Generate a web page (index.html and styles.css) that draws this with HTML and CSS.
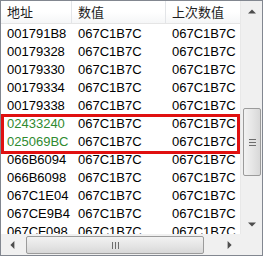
FILE: index.html
```html
<!DOCTYPE html>
<html lang="zh-CN">
<head>
    <meta charset="UTF-8">
    <title>地址列表</title>
    <link rel="stylesheet" href="styles.css">
</head>
<body>
    <div class="listview">
        <div class="viewport">
            <div class="row head">
                <div class="cell">地址</div>
                <div class="cell">数值</div>
                <div class="cell">上次数值</div>
            </div>
            <div class="row"><div class="cell">001791B8</div><div class="cell">067C1B7C</div><div class="cell">067C1B7C</div></div>
            <div class="row"><div class="cell">00179328</div><div class="cell">067C1B7C</div><div class="cell">067C1B7C</div></div>
            <div class="row"><div class="cell">00179330</div><div class="cell">067C1B7C</div><div class="cell">067C1B7C</div></div>
            <div class="row"><div class="cell">00179334</div><div class="cell">067C1B7C</div><div class="cell">067C1B7C</div></div>
            <div class="row"><div class="cell">00179338</div><div class="cell">067C1B7C</div><div class="cell">067C1B7C</div></div>
            <div class="row static"><div class="cell">02433240</div><div class="cell">067C1B7C</div><div class="cell">067C1B7C</div></div>
            <div class="row static"><div class="cell">025069BC</div><div class="cell">067C1B7C</div><div class="cell">067C1B7C</div></div>
            <div class="row"><div class="cell">066B6094</div><div class="cell">067C1B7C</div><div class="cell">067C1B7C</div></div>
            <div class="row"><div class="cell">066B6098</div><div class="cell">067C1B7C</div><div class="cell">067C1B7C</div></div>
            <div class="row"><div class="cell">067C1E04</div><div class="cell">067C1B7C</div><div class="cell">067C1B7C</div></div>
            <div class="row"><div class="cell">067CE9B4</div><div class="cell">067C1B7C</div><div class="cell">067C1B7C</div></div>
            <div class="row"><div class="cell">067CF098</div><div class="cell">067C1B7C</div><div class="cell">067C1B7C</div></div>

            <div class="highlight"></div>
        </div>

        <div class="vscroll">
            <div class="arrow up"></div>
            <div class="track">
                <div class="thumb vthumb"><span class="grip"></span></div>
            </div>
            <div class="arrow down"></div>
        </div>

        <div class="hscroll">
            <div class="arrow left"></div>
            <div class="track">
                <div class="thumb hthumb"><span class="grip"></span></div>
            </div>
            <div class="arrow right"></div>
        </div>

        <div class="corner"></div>
    </div>
</body>
</html>
```

FILE: styles.css
```css
* {
    margin: 0;
    padding: 0;
    box-sizing: border-box;
}

body {
    background: #fff;
    font-family: 'Liberation Sans', 'Noto Sans CJK SC', sans-serif;
    font-size: 13px;
    color: #000;
}

.listview {
    width: 263px;
    height: 256px;
    border: 1px solid #828790;
    display: grid;
    grid-template-columns: 1fr 22px;
    grid-template-rows: 1fr 21px;
    background: #fff;
}

.viewport {
    position: relative;
    overflow: hidden;
}

.row {
    display: grid;
    grid-template-columns: 71px 94px 80px;
    height: 18px;
    align-items: center;
}

.cell {
    padding-left: 6px;
    white-space: nowrap;
    overflow: hidden;
}

.row.head {
    height: 23px;
    background: linear-gradient(#ffffff, #ffffff 50%, #f5f6f7);
    border-bottom: 1px solid #e5e5e5;
    font-family: 'Noto Sans CJK SC', sans-serif;
    font-size: 13px;
    line-height: 22px;
    color: #1e1e1e;
}

.row.head .cell {
    height: 100%;
    border-right: 1px solid #e3e5e8;
}

.row.static .cell:first-child {
    color: #2f8a2f;
}

.highlight {
    position: absolute;
    left: 0;
    top: 113px;
    width: 239px;
    height: 40px;
    border: 3px solid #e01010;
}

.vscroll,
.hscroll {
    display: flex;
    background: #f0f0f0;
}

.vscroll {
    flex-direction: column;
    border-left: 1px solid #e8e8e8;
}

.track {
    flex: 1;
    display: flex;
}

.vscroll .track {
    flex-direction: column;
    padding-top: 86px;
    padding-bottom: 37px;
}

.hscroll .track {
    padding-left: 4px;
    padding-right: 15px;
}

.arrow {
    width: 21px;
    height: 21px;
    position: relative;
    flex: none;
}

.arrow::after {
    content: "";
    position: absolute;
    left: 50%;
    top: 50%;
    border: 4px solid transparent;
}

.arrow.up::after {
    border-bottom-color: #4d4d4d;
    border-top-width: 0;
    transform: translate(-50%, -60%);
}

.arrow.down::after {
    border-top-color: #4d4d4d;
    border-bottom-width: 0;
    transform: translate(-50%, -40%);
}

.arrow.left::after {
    border-right-color: #4d4d4d;
    border-left-width: 0;
    transform: translate(-40%, -50%);
}

.arrow.right::after {
    border-left-color: #4d4d4d;
    border-right-width: 0;
    transform: translate(-60%, -50%);
}

.thumb {
    flex: 1;
    border: 1px solid #9b9b9b;
    border-radius: 2px;
    display: flex;
    align-items: center;
    justify-content: center;
}

.vthumb {
    margin: 0 1px 0 2px;
    background: linear-gradient(90deg, #f2f2f2, #e6e6e6 50%, #d8d8d8);
}

.hthumb {
    margin: 2px 0 1px;
    background: linear-gradient(#f2f2f2, #e6e6e6 50%, #d8d8d8);
}

.grip {
    display: block;
}

.vthumb .grip {
    width: 7px;
    height: 7px;
    background: repeating-linear-gradient(#6d6d6d 0 1px, #e2e2e2 1px 3px);
}

.hthumb .grip {
    width: 7px;
    height: 7px;
    background: repeating-linear-gradient(90deg, #6d6d6d 0 1px, #e2e2e2 1px 3px);
}

.corner {
    background: #f0f0f0;
}
```
